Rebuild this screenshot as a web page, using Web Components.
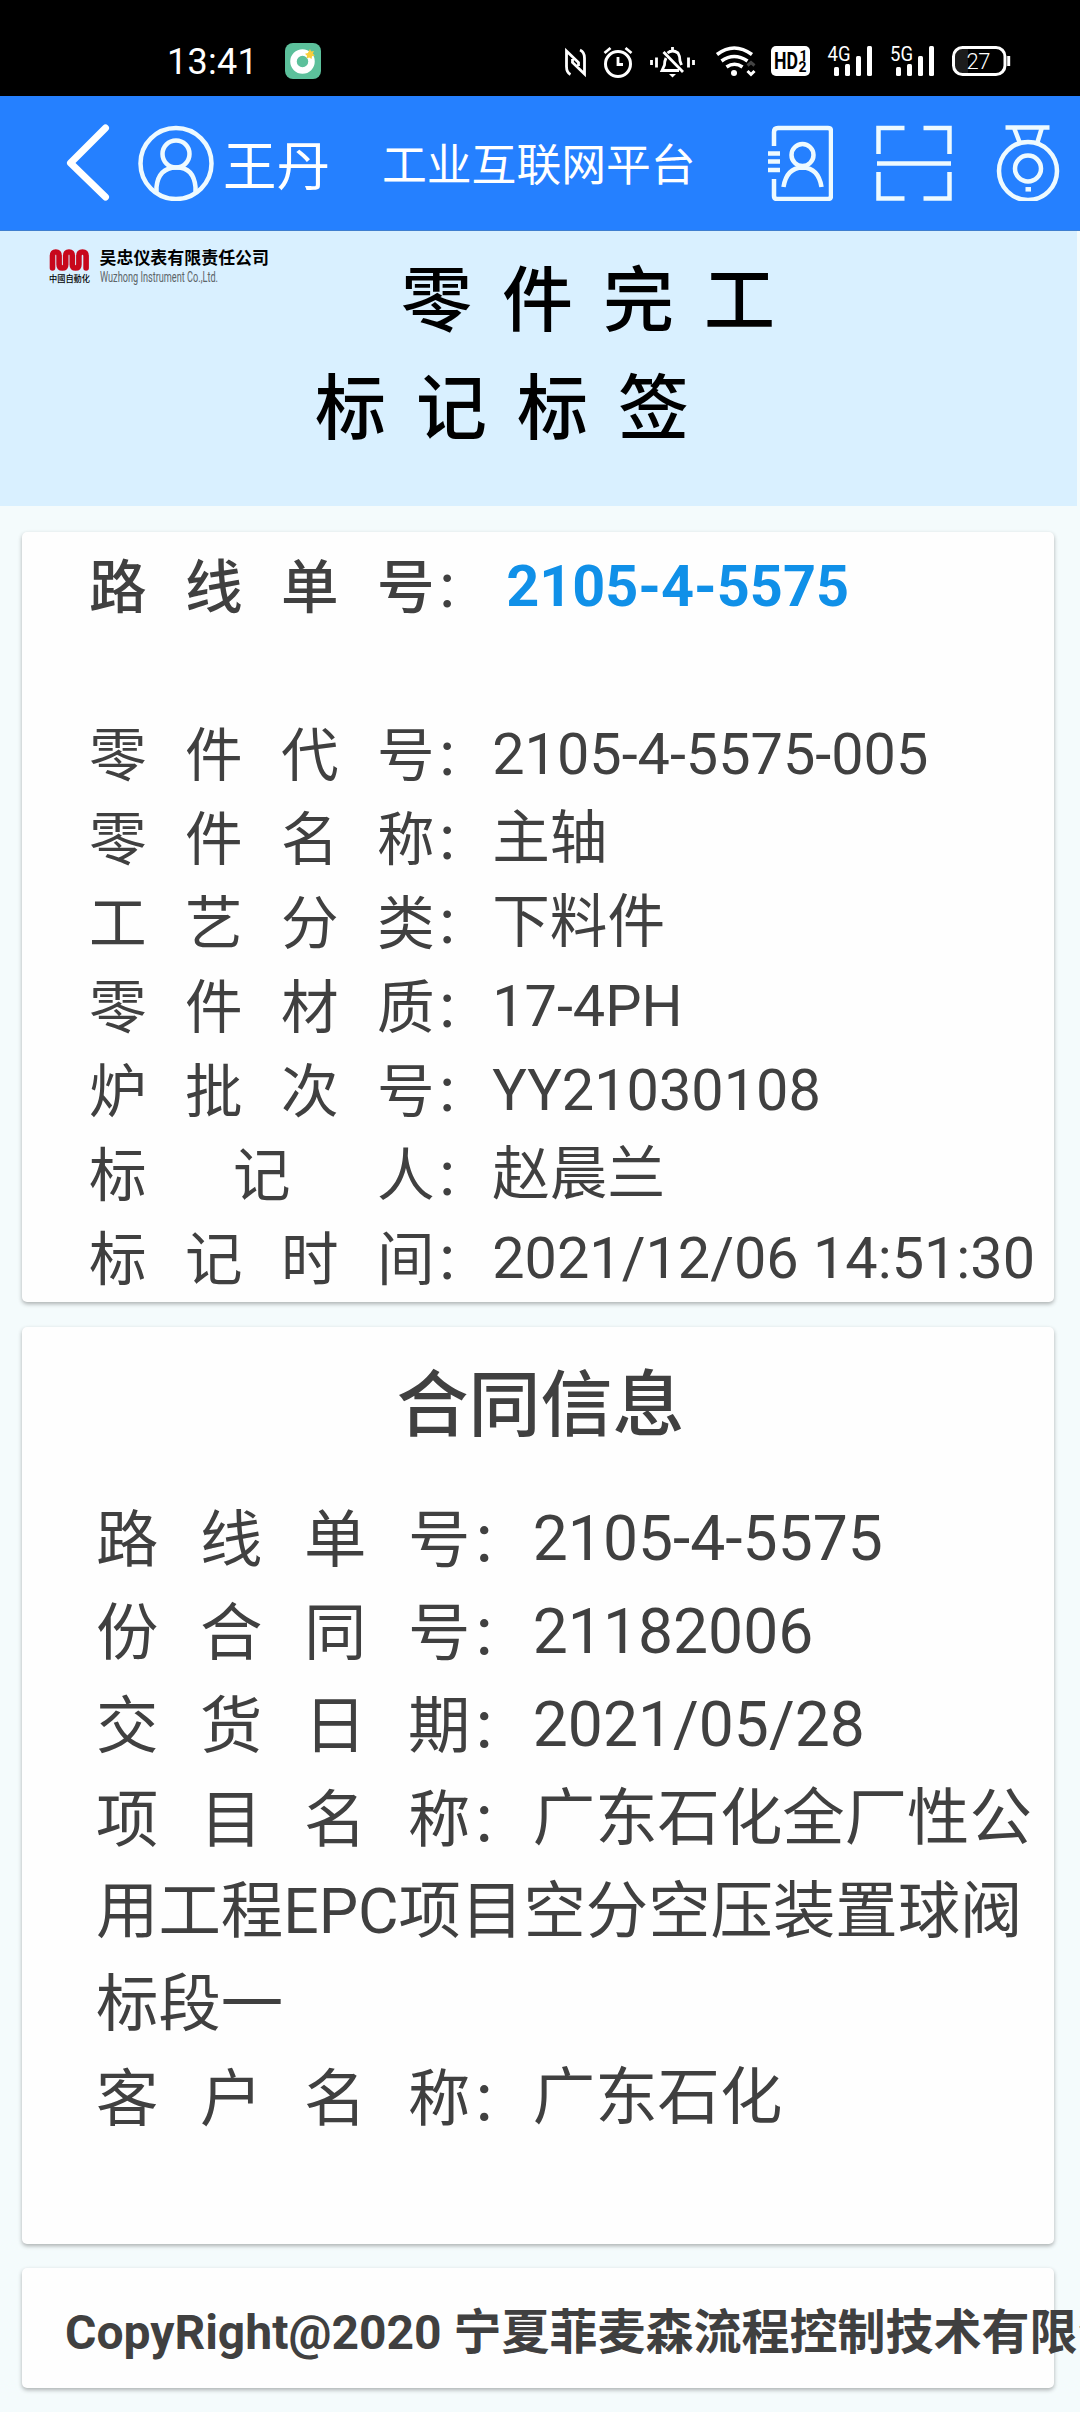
<!DOCTYPE html>
<html lang="zh-CN">
<head>
<meta charset="utf-8">
<meta name="viewport" content="width=device-width, initial-scale=1">
<title>工业互联网平台</title>
<style>
  html, body {
    margin: 0;
    padding: 0;
  }
  body {
    width: 1080px;
    height: 2412px;
    overflow: hidden;
    background: #f4fbfc;
    color: #404040;
    font-family: Roboto, "Noto Sans CJK SC", sans-serif;
  }
</style>
</head>
<body>
<app-page>
  <status-bar time="13:41" battery="27"></status-bar>
  <nav-bar user="王丹">工业互联网平台</nav-bar>
  <label-banner company="吴忠仪表有限责任公司" company-en="Wuzhong Instrument Co.,Ltd." brand="中國自動化">零件完工<br>标记标签</label-banner>
  <info-card class="part">
    <info-row label="路线单号" strong>2105-4-5575</info-row>
    <info-row label="零件代号">2105-4-5575-005</info-row>
    <info-row label="零件名称">主轴</info-row>
    <info-row label="工艺分类">下料件</info-row>
    <info-row label="零件材质">17-4PH</info-row>
    <info-row label="炉批次号">YY21030108</info-row>
    <info-row label="标记人">赵晨兰</info-row>
    <info-row label="标记时间">2021/12/06 14:51:30</info-row>
  </info-card>
  <info-card class="contract" heading="合同信息">
    <info-row label="路线单号">2105-4-5575</info-row>
    <info-row label="份合同号">21182006</info-row>
    <info-row label="交货日期">2021/05/28</info-row>
    <info-row label="项目名称">广东石化全厂性公用工程EPC项目空分空压装置球阀标段一</info-row>
    <info-row label="客户名称">广东石化</info-row>
  </info-card>
  <copy-right>CopyRight@2020 宁夏菲麦森流程控制技术有限公司</copy-right>
</app-page>

<script>
class AppPage extends HTMLElement {
  constructor() {
    super();
    this.attachShadow({ mode: 'open' });
    this.shadowRoot.innerHTML = `
      <style>
        :host {
          display: flex;
          flex-direction: column;
          width: 1080px;
          height: 2412px;
          overflow: hidden;
        }
        ::slotted(.part) {
          --row-size: 57.6px;
          --row-height: 84px;
          height: 757px;
          margin-top: 25px;
          padding: 13px 10px 0 67px;
        }
        ::slotted(.contract) {
          --row-size: 62.4px;
          --row-height: 93.2px;
          height: 888px;
          margin-top: 25px;
          padding: 29px 10px 0 74px;
        }
      </style>
      <slot></slot>
    `;
  }
}

class StatusBar extends HTMLElement {
  constructor() {
    super();
    this.attachShadow({ mode: 'open' });
  }

  connectedCallback() {
    this.shadowRoot.innerHTML = `
      <style>
        :host {
          display: flex;
          align-items: center;
          box-sizing: border-box;
          flex: none;
          height: 96px;
          padding: 26px 69px 0 167px;
          background: #000;
          color: #fff;
        }
        .time {
          width: 118px;
          padding-top: 1px;
          font-size: 36px;
          line-height: 40px;
          letter-spacing: 0.3px;
        }
        .icons {
          margin-left: auto;
        }
        svg {
          display: block;
        }
      </style>
      <span class="time">${this.getAttribute('time')}</span>
      <svg width="36" height="36" viewBox="0 0 36 36">
        <rect width="36" height="36" rx="8" fill="#5cc09b"/>
        <circle cx="17.500" cy="18.500" r="9" fill="none" stroke="#fff" stroke-width="6.500"/>
        <path d="M25 6l1.200 2.600 2.800-.6-1.200 2.600 2 2-2.800.6-.4 2.800-2.400-1.600-2.600 1.200.4-2.800-2-2 2.800-.8z" fill="#f9ce3c"/>
      </svg>
      <svg class="icons" width="447" height="36" viewBox="565 43 447 36" fill="none" stroke="#fff" stroke-width="3">
        <path d="M571.500 74.500q-4-2-4-8V51l12 11.500V66M581 50q4.500 2 4.500 8V74L573.500 62.500V59" stroke-width="2.800"/>
        <circle cx="619" cy="64" r="12.500"/>
        <path d="M619 57v7.500h5M605.500 53l6-5M632.500 53l-6-5" stroke-width="2.800"/>
        <path d="M652.500 60v5M657.500 57.500v10M689.500 57.500v10M694.500 60v5" stroke-width="2.800"/>
        <path d="M664.500 52l19.500 20M667 58q-1.500 3-1.500 7l-2.500 5.500h17M668.500 53q5-4 10.500 0 2 3 2 8l1.500 4M673.500 50v-3" stroke-width="2.800"/>
        <path d="M670 74h7l-3.500 3.500z" fill="#fff" stroke="none"/>
        <path d="M718 54.500q17-13 35 0M722.500 61q12.500-9 26 0M727.500 67q8-5.500 16 0" stroke-width="3.600"/>
        <circle cx="735" cy="73" r="3" fill="#fff" stroke="none"/>
        <path d="M748.500 65.500l3.500-3 3.500 3" stroke="#444"/>
        <path d="M748.500 71l3.500 3.500 3.500-3.500"/>
        <rect x="772" y="46" width="39" height="30" rx="5" fill="#fff" stroke="none"/>
        <g fill="#000" stroke="none" font-weight="700">
          <text x="775" y="69" font-size="24" textLength="24" lengthAdjust="spacingAndGlyphs">HD</text>
          <text x="800.500" y="60.500" font-size="14">1</text>
          <text x="799.500" y="71.500" font-size="14">2</text>
        </g>
        <g fill="#fff" stroke="none">
          <text x="828.500" y="61" font-size="20" textLength="23" lengthAdjust="spacingAndGlyphs">4G</text>
          <rect x="835" y="67" width="5" height="9" rx="1.500"/>
          <rect x="846" y="64" width="5" height="12" rx="1.500"/>
          <rect x="857" y="56" width="5" height="20" rx="1.500"/>
          <rect x="868" y="46" width="5" height="30" rx="1.500"/>
          <text x="891" y="61" font-size="20" textLength="23" lengthAdjust="spacingAndGlyphs">5G</text>
          <rect x="897" y="67" width="5" height="9" rx="1.500"/>
          <rect x="908" y="64" width="5" height="12" rx="1.500"/>
          <rect x="919" y="56" width="5" height="20" rx="1.500"/>
          <rect x="930" y="46" width="5" height="30" rx="1.500"/>
          <path d="M969 49h-6q-7 0-7 7v10q0 7 7 7h6z" fill="#1c1c1c"/>
          <text x="967.500" y="68.500" font-size="22" font-weight="300" textLength="24">${this.getAttribute('battery')}</text>
        </g>
        <rect x="954.500" y="47.500" width="51.500" height="27" rx="9"/>
        <path d="M1009.700 56v10"/>
      </svg>
    `;
  }
}

class NavBar extends HTMLElement {
  constructor() {
    super();
    this.attachShadow({ mode: 'open' });
  }

  connectedCallback() {
    this.shadowRoot.innerHTML = `
      <style>
        :host {
          display: flex;
          align-items: center;
          box-sizing: border-box;
          flex: none;
          height: 135px;
          padding-left: 66px;
          background: #2580ff;
          border-bottom: 1px solid #3f7fd0;
          color: #fff;
        }
        svg {
          display: block;
          flex: none;
          fill: none;
          stroke: #eefaff;
          stroke-width: 4.5;
        }
        .user {
          width: 159px;
          margin-left: 9px;
          padding-top: 9px;
          font-size: 53.500px;
          line-height: 60px;
          white-space: nowrap;
        }
        .title {
          width: 385px;
          padding-top: 6px;
          font-size: 44.800px;
          line-height: 60px;
          white-space: nowrap;
        }
        .avatar { margin-left: 28px; }
        .scan { margin-left: 43px; }
        .camera { margin-left: 44px; }
      </style>
      <svg width="44" height="80" viewBox="66 123 44 80">
        <path d="M105.500 128L70.500 163l35 34" stroke="#fff" stroke-width="7" stroke-linecap="round" stroke-linejoin="round"/>
      </svg>
      <svg class="avatar" width="76" height="76" viewBox="137.500 125 76 76">
        <circle cx="175.500" cy="163.500" r="35.500"/>
        <circle cx="175.500" cy="154" r="13.500"/>
        <path d="M156 192v-5q2-19 19.500-19.500T195 187v5"/>
      </svg>
      <span class="user">${this.getAttribute('user')}</span>
      <span class="title"><slot></slot></span>
      <svg width="66" height="76" viewBox="766 125 66 76">
        <path d="M773 146v-14q0-4 4-4h50q3 0 3 3v65q0 3-3 3h-51q-3 0-3-3v-17M767 153.500h12M767 161.500h12M767 170h12"/>
        <circle cx="801.500" cy="155" r="11"/>
        <path d="M782.500 187q3-19 19-19.500 16 .5 19 19.500"/>
      </svg>
      <svg class="scan" width="76" height="76" viewBox="875.500 125 76 76">
        <path d="M904 128h-26v26M923 128h26v26M904 198.500h-26V172M923 198.500h26V172M876.500 163.500h74"/>
      </svg>
      <svg class="camera" width="64" height="76" viewBox="995.500 125 64 76">
        <path d="M1005 127.500h44M1014 129l5 13M1041 129l-4 13"/>
        <circle cx="1027.500" cy="171" r="29"/>
        <circle cx="1027.500" cy="168.500" r="13"/>
        <path d="M1025 189.300h5.500"/>
      </svg>
    `;
  }
}

class LabelBanner extends HTMLElement {
  constructor() {
    super();
    this.attachShadow({ mode: 'open' });
  }

  connectedCallback() {
    this.shadowRoot.innerHTML = `
      <style>
        :host {
          display: flex;
          box-sizing: border-box;
          flex: none;
          width: 1077px;
          height: 275px;
          margin-bottom: 1px;
          padding: 16px 0 0 48px;
          background: #d9f0ff;
          color: #000;
        }
        .logo {
          display: block;
          flex: none;
          width: 267px;
          height: 42px;
        }
        .title {
          font-size: 71px;
          font-weight: 500;
          line-height: 108px;
          letter-spacing: 30px;
          text-indent: 86px;
          white-space: nowrap;
        }
      </style>
      <svg class="logo" viewBox="48 247 267 42">
        <path d="M52.500 268V256q0-4 3.300-4t3.300 4v8.500q0 3.500 3.300 3.500t3.300-3.500V256q0-4 3.300-4t3.300 4v8.500q0 3.500 3.300 3.500t3.300-3.500V256q0-4 3.600-4t3.600 4v12" fill="none" stroke="#c8081c" stroke-width="5.600" stroke-linecap="round"/>
        <text x="49" y="282" font-size="9" font-weight="500" textLength="41" lengthAdjust="spacingAndGlyphs">${this.getAttribute('brand')}</text>
        <text x="99.500" y="264" font-size="17.500" font-weight="700" textLength="169.500" lengthAdjust="spacingAndGlyphs">${this.getAttribute('company')}</text>
        <text x="100" y="282" font-size="15.500" fill="#5c6468" textLength="118" lengthAdjust="spacingAndGlyphs">${this.getAttribute('company-en')}</text>
      </svg>
      <div class="title"><slot></slot></div>
    `;
  }
}

class InfoCard extends HTMLElement {
  constructor() {
    super();
    this.attachShadow({ mode: 'open' });
  }

  connectedCallback() {
    const heading = this.getAttribute('heading');
    this.shadowRoot.innerHTML = `
      <style>
        :host {
          display: block;
          flex: none;
          margin: 0 26px 0 22px;
          background: #fefefe;
          border-radius: 5px;
          box-shadow: 0 2px 4px rgba(0, 0, 0, 0.3);
        }
        h2 {
          margin: 0 0 36px -59px;
          font-size: 72px;
          font-weight: 500;
          line-height: 100px;
          text-align: center;
        }
      </style>
      ${heading ? `<h2>${heading}</h2>` : ''}
      <slot></slot>
    `;
  }
}

class InfoRow extends HTMLElement {
  constructor() {
    super();
    this.attachShadow({ mode: 'open' });
  }

  connectedCallback() {
    this.shadowRoot.innerHTML = `
      <style>
        :host {
          display: block;
          font-size: var(--row-size);
          line-height: var(--row-height);
        }
        :host([strong]) {
          margin-bottom: var(--row-height);
        }
        .label {
          display: inline-block;
          width: 6em;
          line-height: 1.2;
          text-align-last: justify;
          vertical-align: -2px;
        }
        .colon {
          display: inline-block;
          width: var(--row-size);
          font-size: 0.88em;
          line-height: 1;
          vertical-align: -1px;
        }
        :host([strong]) .label {
          font-weight: 500;
        }
        :host([strong]) .value {
          margin-left: 14px;
          color: #1090e8;
          font-weight: 700;
        }
      </style>
      <span class="label">${this.getAttribute('label')}</span><span class="colon">：</span><span class="value"><slot></slot></span>
    `;
  }
}

class CopyRight extends HTMLElement {
  constructor() {
    super();
    this.attachShadow({ mode: 'open' });
    this.shadowRoot.innerHTML = `
      <style>
        :host {
          display: block;
          box-sizing: border-box;
          flex: none;
          height: 120px;
          margin: 24px 26px 0 22px;
          padding: 35px 0 0 43px;
          background: #fefefe;
          border-radius: 5px;
          box-shadow: 0 2px 4px rgba(0, 0, 0, 0.3);
          font-size: 48px;
          font-weight: 700;
          line-height: 60px;
          white-space: nowrap;
        }
      </style>
      <slot></slot>
    `;
  }
}

customElements.define('app-page', AppPage);
customElements.define('status-bar', StatusBar);
customElements.define('nav-bar', NavBar);
customElements.define('label-banner', LabelBanner);
customElements.define('info-card', InfoCard);
customElements.define('info-row', InfoRow);
customElements.define('copy-right', CopyRight);
</script>
</body>
</html>
